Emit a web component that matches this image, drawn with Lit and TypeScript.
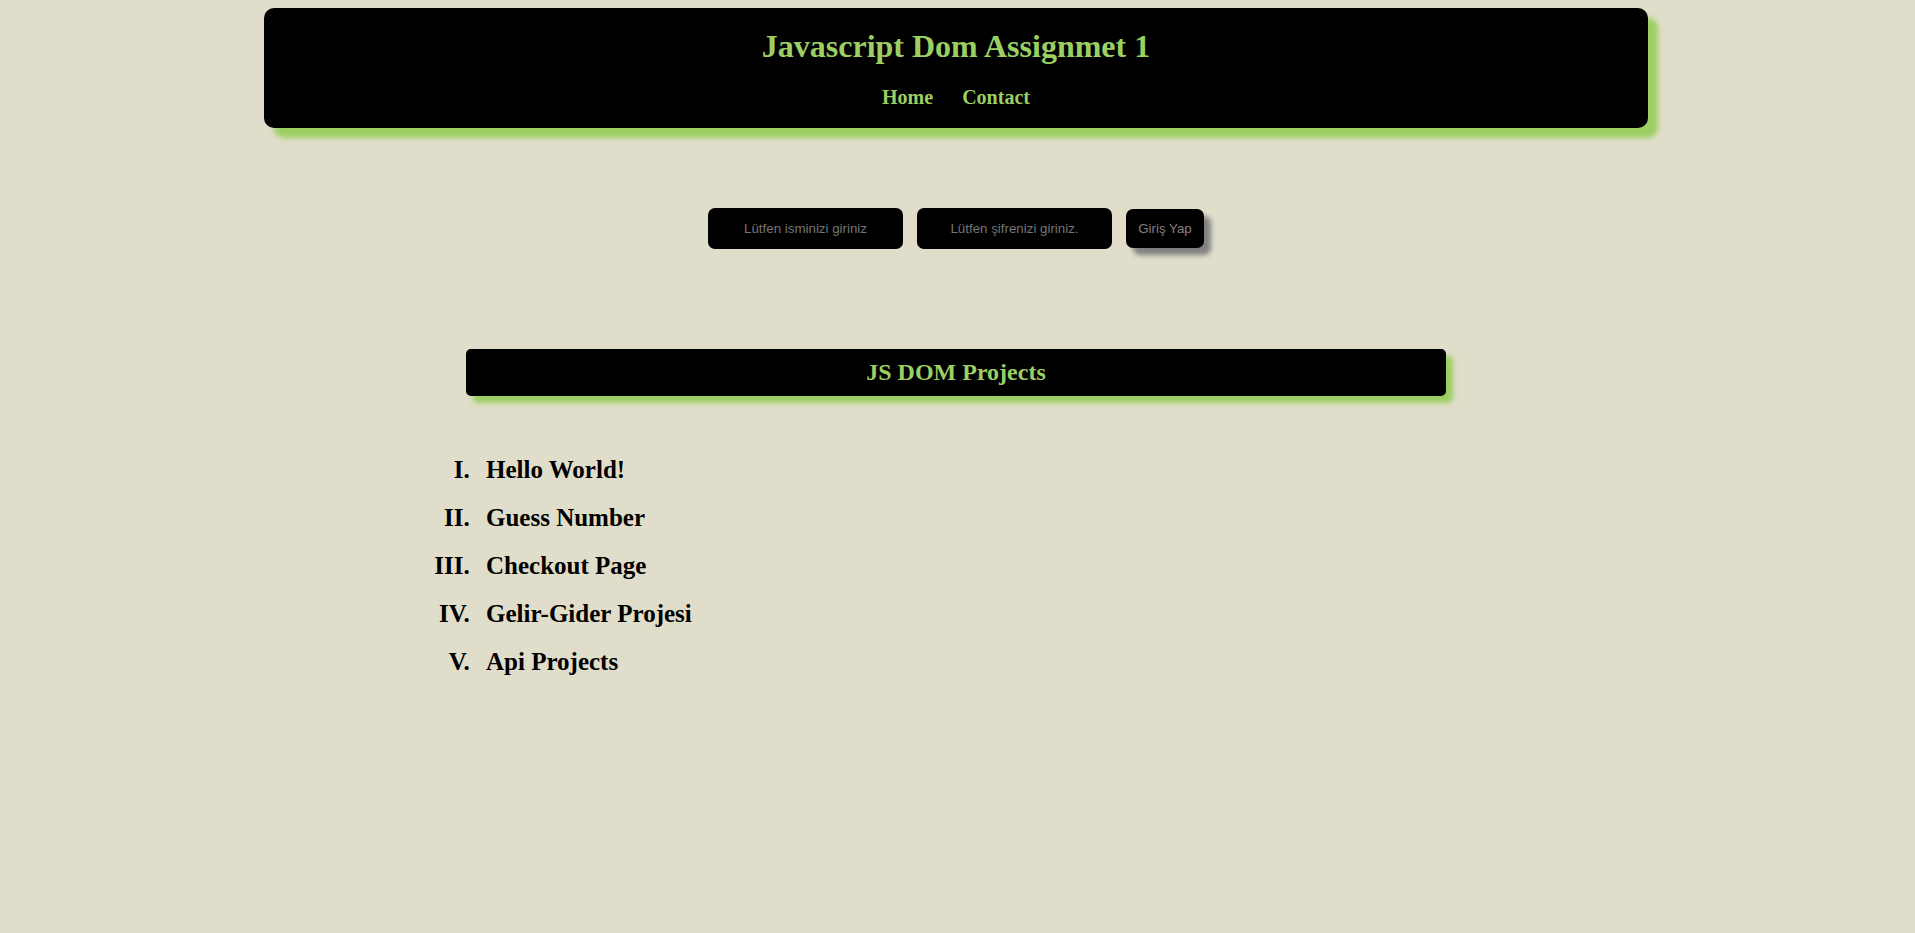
import { LitElement, html, css } from "lit";
import { customElement, state } from "lit/decorators.js";

@customElement("app-root")
export class AppRoot extends LitElement {
  @state() private projects = [
    "Hello World!",
    "Guess Number",
    "Checkout Page",
    "Gelir-Gider Projesi",
    "Api Projects",
  ];

  static styles = css`
    :host {
      --green: #9ccf62;
      display: block;
      box-sizing: border-box;
      min-height: 100vh;
      padding: 8px 267px 32px 264px;
      background: #e0ddca;
      color: #000;
      font-family: "Liberation Serif", "Times New Roman", serif;
    }
    .header {
      display: flex;
      flex-direction: column;
      align-items: center;
      gap: 20px;
      padding: 20px 16px 18px;
      border-radius: 10px;
      background: #000;
      color: var(--green);
      box-shadow: 10px 10px 5px var(--green);
    }
    .title {
      margin: 0;
      font-size: 32px;
      line-height: 37px;
    }
    .nav {
      display: flex;
      gap: 29px;
    }
    .link {
      color: inherit;
      font-size: 20px;
      font-weight: bold;
      line-height: 25px;
      text-decoration: none;
    }
    .login {
      display: flex;
      flex-wrap: wrap;
      justify-content: center;
      align-items: center;
      gap: 14px;
      margin: 80px 0 100px;
    }
    .field,
    .submit {
      box-sizing: border-box;
      border: 0;
      border-radius: 7px;
      background: #000;
      color: #808080;
      font-family: "Liberation Sans", Arial, sans-serif;
      text-align: center;
    }
    .field {
      width: 195px;
      height: 41px;
      padding: 0 12px;
    }
    .field::placeholder {
      color: #757575;
    }
    .submit {
      width: 78px;
      height: 39px;
      padding: 0;
      box-shadow: 7px 7px 5px #808080;
    }
    .projects {
      max-width: 980px;
      margin: 0 auto;
    }
    .heading {
      margin: 0;
      padding: 10px;
      border-radius: 5px;
      background: #000;
      color: var(--green);
      box-shadow: 7px 7px 5px var(--green);
      font-size: 24px;
      line-height: 27px;
      text-align: center;
    }
    .list {
      margin: 50px 0 0;
      padding: 0 0 0 10px;
      list-style: upper-roman;
      font-size: 25px;
      font-weight: bold;
      line-height: 28px;
    }
    .item {
      padding: 10px;
    }
  `;

  render() {
    return html`
      <header class="header">
        <h1 class="title">Javascript Dom Assignmet 1</h1>
        <nav class="nav">
          <a class="link" href="#home">Home</a>
          <a class="link" href="#contact">Contact</a>
        </nav>
      </header>
      <main>
        <form class="login" @submit=${(e: Event) => e.preventDefault()}>
          <input class="field" type="text" aria-label="Lütfen isminizi giriniz" placeholder="Lütfen isminizi giriniz" />
          <input class="field" type="password" aria-label="Lütfen şifrenizi giriniz." placeholder="Lütfen şifrenizi giriniz." />
          <button class="submit" type="submit">Giriş Yap</button>
        </form>
        <section class="projects">
          <h2 class="heading">JS DOM Projects</h2>
          <ol class="list">
            ${this.projects.map((name) => html`<li class="item">${name}</li>`)}
          </ol>
        </section>
      </main>
    `;
  }
}
